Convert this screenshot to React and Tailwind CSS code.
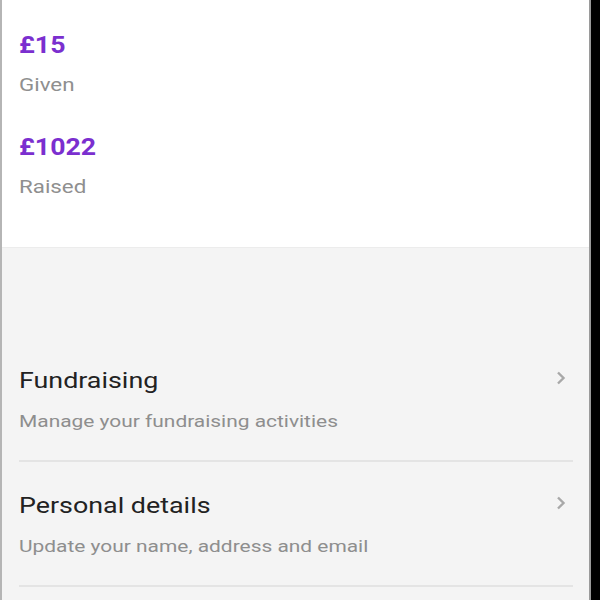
function Chevron() {
  return (
    <svg width="12" height="16" viewBox="0 0 12 16" className="shrink-0">
      <path d="M3 2.5l5.5 5.5-5.5 5.5" fill="none" stroke="#a8a8a8" strokeWidth="2.4" />
    </svg>
  );
}

function MenuRow({ title, subtitle }) {
  return (
    <div className="flex flex-col">
      <div className="flex items-start justify-between pt-[30px] pb-[27px] pr-[6px]">
        <div className="flex flex-col gap-[14px]">
          <div className="text-[22px] leading-[28px] text-[#222] scale-x-[1.22] origin-left">{title}</div>
          <div className="text-[17px] leading-[24px] text-[#8e8e8e] scale-x-[1.23] origin-left">{subtitle}</div>
        </div>
        <div className="pt-[3px]">
          <Chevron />
        </div>
      </div>
      <div className="h-[2px] bg-[#e4e4e4]" />
    </div>
  );
}

function Stat({ amount, label }) {
  return (
    <div className="flex flex-col gap-[13px]">
      <div className="text-[23px] leading-[28px] font-bold text-[#7b2fcf] scale-x-[1.16] origin-left">{amount}</div>
      <div className="text-[18px] leading-[24px] text-[#8f8f8f] scale-x-[1.24] origin-left">{label}</div>
    </div>
  );
}

export default function App() {
  return (
    <div
      className="flex w-[600px] h-[600px] overflow-hidden bg-black"
      style={{ fontFamily: "Roboto, 'Noto Sans', sans-serif" }}
    >
      <div className="w-[2px] bg-[#b5b5b5]" />
      <div className="flex-1 flex flex-col bg-[#f4f4f4]">
        <div className="h-[248px] bg-white border-b border-[#ececec] flex flex-col gap-[37px] pt-[32px] pl-[17px]">
          <Stat amount="£15" label="Given" />
          <Stat amount="£1022" label="Raised" />
        </div>
        <div className="flex flex-col pl-[17px] pr-[16px] pt-[89px]">
          <MenuRow title="Fundraising" subtitle="Manage your fundraising activities" />
          <MenuRow title="Personal details" subtitle="Update your name, address and email" />
        </div>
      </div>
      <div className="w-[2px] bg-[#9a9a9a]" />
      <div className="w-[9px] bg-black" />
    </div>
  );
}
